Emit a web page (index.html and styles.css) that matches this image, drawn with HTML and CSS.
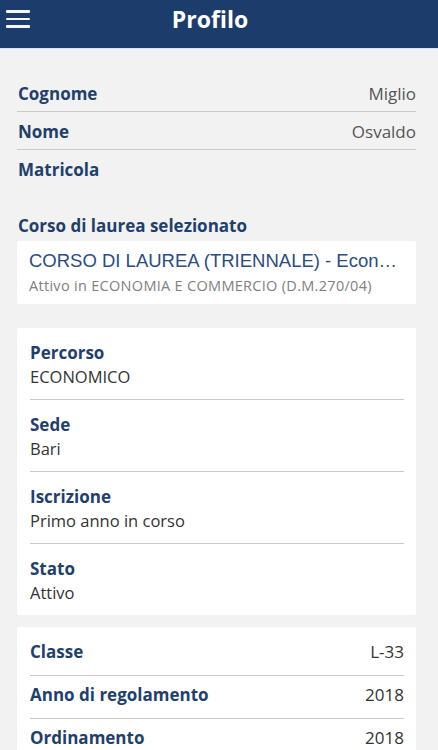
FILE: index.html
```html
<!DOCTYPE html>
<html lang="it">
<head>
    <meta charset="UTF-8">
    <meta name="viewport" content="width=device-width, initial-scale=1.0">
    <title>Profilo</title>
    <link rel="stylesheet" href="styles.css">
</head>
<body>
    <header class="topbar">
        <button class="menu-btn" aria-label="Menu">
            <span></span><span></span><span></span>
        </button>
        <h1>Profilo</h1>
        <div></div>
    </header>

    <div class="page">
        <div class="info-list">
            <div class="info-row">
                <span class="label">Cognome</span>
                <span class="value">Miglio</span>
            </div>
            <div class="info-row">
                <span class="label">Nome</span>
                <span class="value">Osvaldo</span>
            </div>
            <div class="info-row">
                <span class="label">Matricola</span>
                <span class="value"></span>
            </div>
        </div>

        <h2 class="section-title">Corso di laurea selezionato</h2>
        <div class="card course-card">
            <div class="course-name">CORSO DI LAUREA (TRIENNALE) - Economia e Commercio</div>
            <div class="course-status">Attivo in ECONOMIA E COMMERCIO (D.M.270/04)</div>
        </div>

        <div class="card detail-card">
            <div class="detail">
                <div class="label">Percorso</div>
                <div class="detail-value">ECONOMICO</div>
            </div>
            <div class="detail">
                <div class="label">Sede</div>
                <div class="detail-value">Bari</div>
            </div>
            <div class="detail">
                <div class="label">Iscrizione</div>
                <div class="detail-value">Primo anno in corso</div>
            </div>
            <div class="detail">
                <div class="label">Stato</div>
                <div class="detail-value">Attivo</div>
            </div>
        </div>

        <div class="card table-card">
            <div class="table-row">
                <span class="label">Classe</span>
                <span class="value">L-33</span>
            </div>
            <div class="table-row">
                <span class="label">Anno di regolamento</span>
                <span class="value">2018</span>
            </div>
            <div class="table-row">
                <span class="label">Ordinamento</span>
                <span class="value">2018</span>
            </div>
        </div>
    </div>
</body>
</html>
```

FILE: styles.css
```css
body {
    font-family: "Open Sans", Lato, sans-serif;
    background-color: #f2f2f2;
    margin: 0;
    padding: 0;
}

.topbar {
    display: grid;
    grid-template-columns: 36px 1fr 54px;
    align-items: center;
    height: 48px;
    background-color: #1c3c6c;
    border-bottom: 1px solid #dde6f0;
}

.topbar h1 {
    margin: 0;
    text-align: center;
    color: white;
    font-size: 23px;
    font-weight: bold;
    line-height: 28px;
    padding-bottom: 10px;
}

.menu-btn {
    display: flex;
    flex-direction: column;
    gap: 5px;
    width: 24px;
    margin: 0 0 10px 6px;
    padding: 0;
    border: none;
    background: none;
}

.menu-btn span {
    display: block;
    height: 2.5px;
    background-color: #f4f6fa;
    border-radius: 1px;
}

.page {
    padding: 25px 22px 0 17px;
}

.label {
    color: #1f3f6d;
    font-weight: bold;
    font-size: 17px;
    line-height: 20px;
}

.value {
    color: #555;
    font-size: 17px;
    line-height: 20px;
}

.info-row {
    display: flex;
    justify-content: space-between;
    padding: 10px 0 7px 1px;
    border-bottom: 1px solid #c9c9c9;
}

.info-row:last-child {
    border-bottom: none;
}

.section-title {
    margin: 29px 0 5px 1px;
    color: #1f3f6d;
    font-size: 17px;
    line-height: 20px;
    font-weight: bold;
}

.card {
    background-color: white;
    border-radius: 2px;
}

.course-card {
    padding: 9px 14px 9px 12px;
}

.course-name {
    font-family: "Liberation Sans", Arial, sans-serif;
    color: #2b4c84;
    font-size: 18.5px;
    line-height: 22px;
    white-space: nowrap;
    overflow: hidden;
    text-overflow: ellipsis;
}

.course-status {
    margin-top: 5px;
    color: #808080;
    font-size: 14.5px;
    letter-spacing: 0.3px;
    line-height: 18px;
}

.detail-card {
    margin-top: 24px;
    padding: 0 12px 0 13px;
}

.detail {
    padding: 15px 0 11px;
    border-bottom: 1px solid #c9c9c9;
}

.detail:last-child {
    border-bottom: none;
}

.detail-value {
    margin-top: 3px;
    color: #333;
    font-size: 16.5px;
    line-height: 22px;
}

.table-card {
    margin-top: 12px;
    padding: 6px 12px 0 13px;
}

.table-row {
    display: flex;
    justify-content: space-between;
    padding: 9px 0 13px;
    border-bottom: 1px solid #c9c9c9;
}

.table-row:last-child {
    border-bottom: none;
}

.table-row .value {
    color: #333;
}
```
